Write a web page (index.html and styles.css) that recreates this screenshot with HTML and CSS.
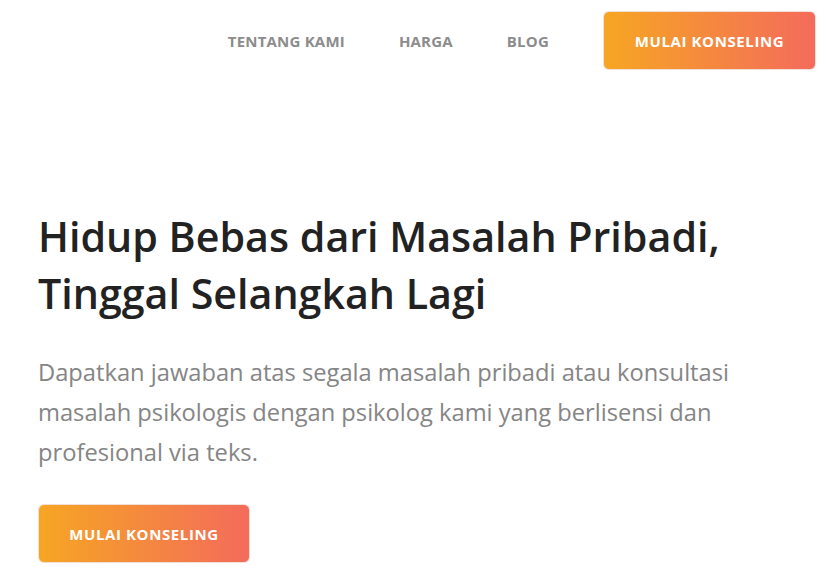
FILE: index.html
```html
<!DOCTYPE html>
<html lang="id">
<head>
<meta charset="utf-8">
<title>Konseling</title>
<link rel="stylesheet" href="styles.css">
</head>
<body>
<header class="nav">
  <a class="nav-link" href="#">TENTANG KAMI</a>
  <a class="nav-link" href="#">HARGA</a>
  <a class="nav-link" href="#">BLOG</a>
  <a class="btn btn-nav" href="#">MULAI KONSELING</a>
</header>
<main class="hero">
  <h1 class="hero-title">Hidup Bebas dari Masalah Pribadi,<br>Tinggal Selangkah Lagi</h1>
  <p class="hero-text">Dapatkan jawaban atas segala masalah pribadi atau konsultasi masalah psikologis dengan psikolog kami yang berlisensi dan profesional via teks.</p>
  <a class="btn btn-hero" href="#">MULAI KONSELING</a>
</main>
</body>
</html>
```
FILE: styles.css
```css
* { box-sizing: border-box; }
html, body { margin: 0; padding: 0; background: #fff; }
body {
  font-family: "Open Sans", "Noto Sans", sans-serif;
  width: 830px;
  height: 587px;
  overflow: hidden;
}
a { text-decoration: none; }
.nav {
  display: flex;
  justify-content: flex-end;
  align-items: center;
  padding: 11px 14px 0 0;
  gap: 54px;
}
.nav-link {
  color: #8c8c8c;
  font-size: 15px;
  font-weight: 700;
  letter-spacing: 0.2px;
}
.btn {
  display: flex;
  align-items: center;
  justify-content: center;
  height: 59px;
  color: #fff;
  font-size: 15px;
  font-weight: 700;
  letter-spacing: 0.6px;
  border-radius: 6px;
  border: 1px solid #f0e0d8;
  background: linear-gradient(90deg, #f6a623 0%, #f46b5b 100%);
}
.btn-nav { width: 213px; }
.hero {
  padding: 138px 0 0 38px;
}
.hero-title {
  margin: 0;
  font-size: 41.2px;
  font-weight: 600;
  line-height: 57px;
  color: #222;
}
.hero-text {
  margin: 30px 0 0;
  font-size: 23.7px;
  line-height: 40px;
  color: #858585;
  width: 760px;
}
.btn-hero {
  width: 212px;
  margin-top: 32px;
}
```
